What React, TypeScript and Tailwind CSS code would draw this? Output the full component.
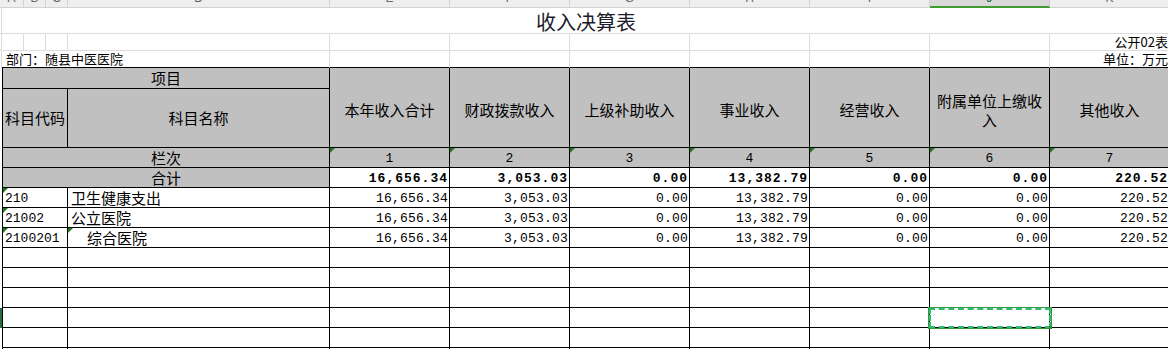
import React from "react";

const letters = ["B", "C", "D", "E", "F", "G", "H", "I", "J", "K"];

const headers = [
  "本年收入合计",
  "财政拨款收入",
  "上级补助收入",
  "事业收入",
  "经营收入",
  "附属单位上缴收入",
  "其他收入",
];

const totals = ["16,656.34", "3,053.03", "0.00", "13,382.79", "0.00", "0.00", "220.52"];

const items = [
  { code: "210", name: "卫生健康支出", indent: false },
  { code: "21002", name: "公立医院", indent: false },
  { code: "2100201", name: "综合医院", indent: true },
];

const cjk = "font-['Noto_Sans_CJK_SC',sans-serif]";
const mono = "font-['Liberation_Mono','Noto_Sans_CJK_SC',monospace]";
const line = "border-r border-b border-black";
const light = "border-r border-b border-[#dcdcdc]";

function Flag() {
  return (
    <span className="absolute left-0 top-0 h-[5px] w-[5px] bg-[#1f7a1f] [clip-path:polygon(0_0,100%_0,0_100%)]" />
  );
}

function ColLetter({ ch, active }: { ch: string; active?: boolean }) {
  return (
    <div
      className={
        active
          ? "flex h-full justify-center overflow-hidden border-r border-b-2 border-r-[#cfcfcf] border-b-[#3e9b2f] bg-[#d9d9d9]"
          : "flex h-full justify-center overflow-hidden border-r border-b border-[#d2d2d2] bg-[#eeeeee]"
      }
    >
      <span
        className={`-mt-[8px] font-['Liberation_Sans',sans-serif] text-[12px] leading-[12px] ${
          active ? "text-[#1d6b3a]" : "text-[#666]"
        }`}
      >
        {ch}
      </span>
    </div>
  );
}

export default function App() {
  const empties = [0, 1, 2, 3, 4, 5];

  return (
    <div className="h-[349px] w-[1168px] overflow-hidden bg-white text-black">
      <div className="grid grid-cols-[2px_22px_22px_22px_262px_repeat(7,120px)] grid-rows-[8px_26px_17px_17px_21px_59px_repeat(11,20px)]">
        {/* column letters */}
        <div className="col-span-2">
          <ColLetter ch="A" />
        </div>
        {letters.map((ch) => (
          <ColLetter key={ch} ch={ch} active={ch === "J"} />
        ))}

        {/* title */}
        <div className="border-r border-b border-[#dcdcdc]" />
        <div
          className={`col-span-11 flex items-center justify-center border-b border-[#dcdcdc] pt-[2px] text-[20px] text-[#1c1c2c] ${cjk}`}
        >
          收入决算表
        </div>

        {/* row 2 */}
        <div className={light} />
        {[0, 1, 2, 3, 4, 5, 6, 7, 8, 9].map((i) => (
          <div key={i} className={light} />
        ))}
        <div className={`flex items-end justify-end border-b border-[#dcdcdc] pr-[2px] text-[13px] leading-[16px] ${cjk}`}>
          公开02表
        </div>

        {/* row 3 */}
        <div className="border-r border-[#dcdcdc]" />
        <div
          className={`col-span-4 flex items-end whitespace-nowrap border-r border-b border-r-[#dcdcdc] border-b-black pl-[4px] text-[13px] leading-[16px] ${cjk}`}
        >
          部门：随县中医医院
        </div>
        {[0, 1, 2, 3, 4, 5].map((i) => (
          <div key={i} className="border-r border-b border-r-[#dcdcdc] border-b-black" />
        ))}
        <div className={`flex items-end justify-end border-b border-black pr-[2px] text-[13px] leading-[16px] ${cjk}`}>
          单位：万元
        </div>

        {/* header rows */}
        <div />
        <div className={`col-span-4 flex items-center justify-center border-l ${line} bg-[#c0c0c0] text-[15px] ${cjk}`}>
          项目
        </div>
        {headers.map((h) => (
          <div
            key={h}
            className={`row-span-2 flex items-center justify-center px-[5px] pt-[4px] text-center text-[15px] leading-[19px] ${line} bg-[#c0c0c0] ${cjk}`}
          >
            {h}
          </div>
        ))}
        <div />
        <div className={`col-span-3 flex items-center justify-center border-l ${line} bg-[#c0c0c0] text-[15px] ${cjk}`}>
          科目代码
        </div>
        <div className={`flex items-center justify-center ${line} bg-[#c0c0c0] text-[15px] ${cjk}`}>
          科目名称
        </div>

        {/* 栏次 */}
        <div />
        <div className={`col-span-4 flex items-center justify-center border-l ${line} bg-[#c0c0c0] pt-[2px] text-[15px] ${cjk}`}>
          栏次
        </div>
        {headers.map((h, i) => (
          <div key={h} className={`relative flex items-center justify-center ${line} bg-[#c0c0c0] pt-[2px] text-[13px] ${mono}`}>
            <Flag />
            {i + 1}
          </div>
        ))}

        {/* 合计 */}
        <div />
        <div className={`col-span-4 flex items-center justify-center border-l ${line} bg-[#c0c0c0] pt-[2px] text-[15px] ${cjk}`}>
          合计
        </div>
        {totals.map((v, i) => (
          <div
            key={i}
            className={`flex items-center justify-end ${line} pt-[2px] pr-[1px] text-[13px] font-bold tracking-[1px] ${mono}`}
          >
            {v}
          </div>
        ))}

        {/* data rows */}
        {items.map((it) => (
          <React.Fragment key={it.code}>
            <div />
            <div className={`relative col-span-3 flex items-center border-l ${line} pt-[2px] pl-[2px] text-[13px] ${mono}`}>
              <Flag />
              {it.code}
            </div>
            <div
              className={`relative flex items-center ${line} pt-[2px] text-[15px] ${cjk} ${
                it.indent ? "pl-[19px]" : "pl-[3px]"
              }`}
            >
              {it.indent && <Flag />}
              {it.name}
            </div>
            {totals.map((v, i) => (
              <div
                key={i}
                className={`flex items-center justify-end ${line} pt-[2px] pr-[1px] text-[13px] tracking-[0.2px] ${mono}`}
              >
                {v}
              </div>
            ))}
          </React.Fragment>
        ))}

        {/* empty rows */}
        {empties.map((r) => (
          <React.Fragment key={r}>
            <div className={r === 3 ? "bg-[#217346]" : ""} />
            <div className={`col-span-3 border-l ${line}`} />
            <div className={line} />
            {headers.map((h, i) => (
              <div key={h} className={`relative ${line}`}>
                {r === 3 && i === 5 && (
                  <div className="absolute -left-[2px] -top-[1px] z-10 h-[22px] w-[124px] border border-[#3a9a3a]">
                    <div className="h-full w-full border-2 border-dashed border-[#2bbd74]" />
                    <span className="absolute -right-[1px] -bottom-[1px] h-[3px] w-[3px] bg-[#2f8f2f]" />
                  </div>
                )}
              </div>
            ))}
          </React.Fragment>
        ))}
      </div>
    </div>
  );
}
